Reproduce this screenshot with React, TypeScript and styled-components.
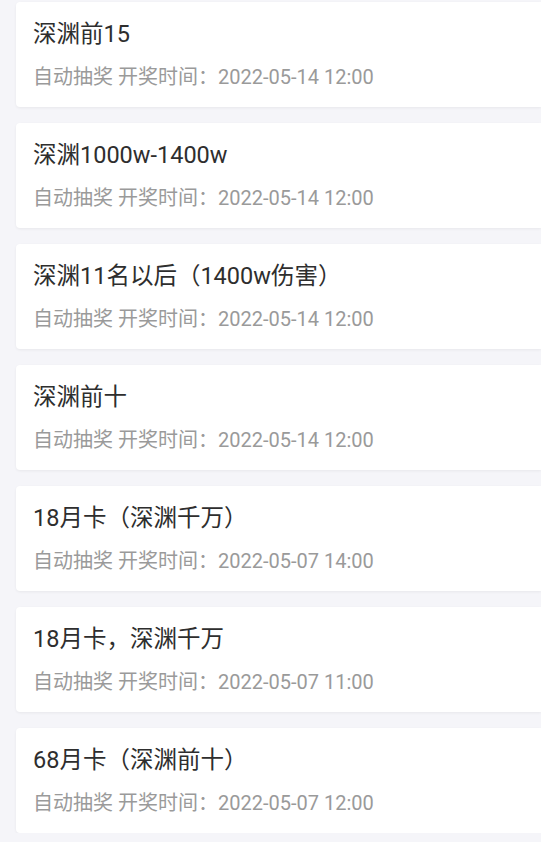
import React from 'react';
import styled, {createGlobalStyle} from 'styled-components';

type Lottery = {
  title: string;
  drawTime: string;
};

const lotteries: Lottery[] = [
  {title: '深渊前15', drawTime: '2022-05-14 12:00'},
  {title: '深渊1000w-1400w', drawTime: '2022-05-14 12:00'},
  {title: '深渊11名以后（1400w伤害）', drawTime: '2022-05-14 12:00'},
  {title: '深渊前十', drawTime: '2022-05-14 12:00'},
  {title: '18月卡（深渊千万）', drawTime: '2022-05-07 14:00'},
  {title: '18月卡，深渊千万', drawTime: '2022-05-07 11:00'},
  {title: '68月卡（深渊前十）', drawTime: '2022-05-07 12:00'},
];

function App() {
  return (
    <>
      <GlobalStyle />
      <List>
        {lotteries.map((item) => (
          <Card key={item.title}>
            <Title>{item.title}</Title>
            <Meta>自动抽奖 开奖时间：{item.drawTime}</Meta>
          </Card>
        ))}
      </List>
    </>
  );
}

const GlobalStyle = createGlobalStyle`
  html, body {
    margin: 0;
    padding: 0;
    background: #f5f5f9;
    overflow: hidden;
  }

  body {
    font-family: Roboto, "Noto Sans CJK SC", sans-serif;
  }
`;

const List = styled.div`
  display: flex;
  flex-direction: column;
  gap: 16px;
  padding: 2px 0 0 16px;
`;

const Card = styled.div`
  display: flex;
  flex-direction: column;
  height: 105px;
  box-sizing: border-box;
  padding: 17px 18px 16px 17px;
  background: #ffffff;
  border-radius: 4px 0 0 4px;
  box-shadow: 0 1px 3px rgba(0, 0, 0, 0.06);
`;

const Title = styled.div`
  font-size: 23.5px;
  line-height: 30px;
  color: #2e2e2e;
  white-space: nowrap;
`;

const Meta = styled.div`
  margin-top: 14px;
  font-size: 20px;
  line-height: 28px;
  color: #9a9a9a;
  white-space: nowrap;
`;

export default App;
